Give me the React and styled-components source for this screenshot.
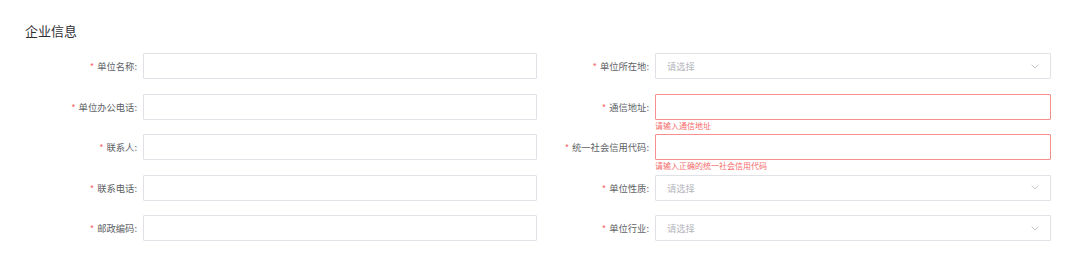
import React from "react";
import styled, { createGlobalStyle } from "styled-components";

const Global = createGlobalStyle`
  html, body { margin: 0; padding: 0; background: #fff; }
  body { font-family: "Noto Sans CJK SC", "Liberation Sans", sans-serif; }
`;

const Page = styled.div`
  padding: 21px 0 0 25px;
`;

const Title = styled.h2`
  margin: 0 0 13px;
  font-size: 13px;
  line-height: 19px;
  font-weight: 400;
  color: #303133;
`;

const Form = styled.div`
  display: grid;
  grid-template-columns: 512px 514px;
  grid-auto-rows: 40.5px;
`;

const Item = styled.div`
  display: grid;
  grid-template-columns: 118px 1fr;
  align-items: start;
`;

const Label = styled.label`
  height: 26px;
  line-height: 26px;
  text-align: right;
  padding-right: 6px;
  font-size: 9.3px;
  color: #606266;
  white-space: nowrap;
`;

const Star = styled.span`
  color: #f56c6c;
  margin-right: 3px;
`;

const Control = styled.div`
  display: flex;
  flex-direction: column;
`;

const Box = styled.div`
  box-sizing: border-box;
  height: 26px;
  border: 1px solid ${(p) => (p.$error ? "#f78f8f" : "#e1e2e8")};
  border-radius: 1px;
  background: #fff;
  display: flex;
  align-items: center;
  justify-content: space-between;
  padding: 0 11px 0 11px;
`;

const Placeholder = styled.span`
  font-size: 9.3px;
  color: #b4b6bd;
`;

const Message = styled.div`
  font-size: 8px;
  line-height: 12px;
  color: #f56c6c;
  white-space: nowrap;
`;

const Chevron = () => (
  <svg width="8" height="5" viewBox="0 0 8 5" fill="none">
    <path d="M0.6 0.6 L4 4 L7.4 0.6" stroke="#c8cad0" strokeWidth="1" />
  </svg>
);

const Field = ({ label, select, error }) => (
  <Item>
    <Label>
      <Star>*</Star>
      {label}:
    </Label>
    <Control>
      <Box $error={!!error}>
        {select && (
          <>
            <Placeholder>请选择</Placeholder>
            <Chevron />
          </>
        )}
      </Box>
      {error && <Message>{error}</Message>}
    </Control>
  </Item>
);

export default function App() {
  return (
    <Page>
      <Global />
      <Title>企业信息</Title>
      <Form>
        <Field label="单位名称" />
        <Field label="单位所在地" select />
        <Field label="单位办公电话" />
        <Field label="通信地址" error="请输入通信地址" />
        <Field label="联系人" />
        <Field label="统一社会信用代码" error="请输入正确的统一社会信用代码" />
        <Field label="联系电话" />
        <Field label="单位性质" select />
        <Field label="邮政编码" />
        <Field label="单位行业" select />
      </Form>
    </Page>
  );
}
